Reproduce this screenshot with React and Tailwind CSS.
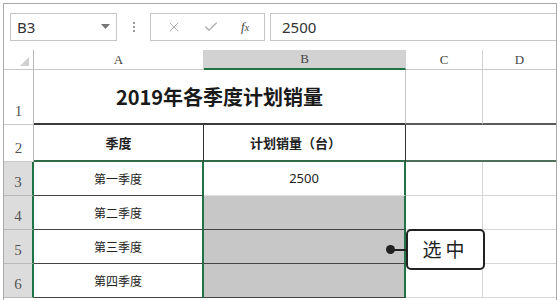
import { X, Check } from 'lucide-react';

const SANS = "font-['Noto_Sans','Noto_Sans_CJK_SC',sans-serif]";
const CJK = "font-['Noto_Sans_CJK_SC',sans-serif]";
const SERIF = "font-['Liberation_Serif','Noto_Sans_CJK_SC',serif]";

const rows = [
  { n: 3, label: '第一季度', value: '2500', active: true },
  { n: 4, label: '第二季度' },
  { n: 5, label: '第三季度' },
  { n: 6, label: '第四季度' },
];

function ColHead({ children, selected, last }) {
  return (
    <div
      className={`flex items-center justify-center text-[13px] text-[#444] ${SERIF} ${
        selected ? 'bg-[#d2d2d2] border-b-2 border-b-[#217346]' : 'border-b border-b-[#c8c8c8]'
      } ${last ? '' : 'border-r border-r-[#d0d0d0]'}`}
    >
      {children}
    </div>
  );
}

function RowHead({ n, selected }) {
  return (
    <div
      className={`flex items-end justify-center pb-[2px] text-[15px] text-[#555] ${SERIF} border-b ${
        selected
          ? 'bg-[#dcdcdc] border-b-[#b8b8b8] border-r-2 border-r-[#217346]'
          : 'border-b-[#c8c8c8] border-r border-r-[#b8b8b8]'
      }`}
    >
      {n}
    </div>
  );
}

export default function App() {
  return (
    <div className="w-[560px] h-[300px] bg-white overflow-hidden relative pt-[3px] pl-[3px]">
      <div className="h-[320px] border-t border-l border-r border-[#a8a8a8] mr-[3px]">
        {/* formula bar */}
        <div className="h-[45px] flex items-start pt-[9px] pl-[6px]">
          <div className="w-[107px] h-[28px] border border-[#c6c6c6] flex items-center justify-between pl-[6px] pr-[6px]">
            <span className={`text-[15px] text-[#333] ${SANS}`}>B3</span>
            <svg width="9" height="6" viewBox="0 0 9 6"><path d="M0 0h9L4.5 5z" fill="#777" /></svg>
          </div>
          <div className="w-[33px] h-[28px] flex flex-col items-center justify-center gap-[2px]">
            <span className="w-[2px] h-[2px] bg-[#999]" />
            <span className="w-[2px] h-[2px] bg-[#999]" />
            <span className="w-[2px] h-[2px] bg-[#999]" />
          </div>
          <div className="w-[115px] h-[28px] border border-[#c6c6c6] flex items-center justify-around px-[4px]">
            <X size={16} strokeWidth={1.5} className="text-[#b0b0b0]" />
            <Check size={16} strokeWidth={2} className="text-[#b0b0b0]" />
            <span className="text-[13px] italic text-[#444] font-['Liberation_Serif',serif]">
              f<span className="text-[10px]">x</span>
            </span>
          </div>
          <div className="flex-1 h-[28px] ml-[5px] border border-[#c6c6c6] border-r-0 flex items-center pl-[11px]">
            <span className={`text-[15px] text-[#333] ${SANS}`}>2500</span>
          </div>
        </div>

        {/* grid */}
        <div className="grid grid-cols-[30px_170px_202px_77px_1fr] grid-rows-[20px_55px_37px_34px_34px_34px_34px] mt-[1px]">
          {/* header row */}
          <div className="border-b border-b-[#c8c8c8] border-r border-r-[#b8b8b8] flex items-end justify-end pr-[4px] pb-[3px]">
            <svg width="9" height="9" viewBox="0 0 9 9"><path d="M9 0V9H0z" fill="#d0d0d0" /></svg>
          </div>
          <ColHead>A</ColHead>
          <ColHead selected>B</ColHead>
          <ColHead>C</ColHead>
          <ColHead last>D</ColHead>

          {/* row 1 */}
          <RowHead n={1} />
          <div className={`col-span-2 flex items-center justify-center border-b-2 border-b-[#3a3a3a] border-r border-r-[#c8c8c8] text-[20px] font-bold text-[#1a1a1a] ${CJK}`}>
            2019年各季度计划销量
          </div>
          <div className="border-b-2 border-b-[#5a5a5a] border-r border-r-[#d0d0d0]" />
          <div className="border-b-2 border-b-[#5a5a5a]" />

          {/* row 2 */}
          <RowHead n={2} />
          <div className={`flex items-center justify-center border-b-2 border-b-[#2e6b48] border-r border-r-[#333] text-[13px] font-bold text-[#222] ${CJK}`}>
            季度
          </div>
          <div className={`flex items-center justify-start pl-[46px] border-b-2 border-b-[#2e6b48] border-r border-r-[#333] text-[13px] font-bold text-[#222] ${CJK}`}>
            计划销量（台）
          </div>
          <div className="border-b-2 border-b-[#4f6f5c]" />
          <div className="border-b-2 border-b-[#4f6f5c]" />

          {rows.map(r => (
            <Row key={r.n} r={r} />
          ))}
        </div>
      </div>

      {/* callout */}
      <div className="absolute left-[386px] top-[245px] w-[9px] h-[9px] rounded-full bg-[#222]" />
      <div className="absolute left-[394px] top-[249px] w-[13px] h-[2px] bg-[#222]" />
      <div className={`absolute left-[406px] top-[229px] w-[79px] h-[41px] rounded-[5px] border-2 border-[#222] bg-white flex items-center justify-center text-[19px] text-[#222] tracking-[4px] ${CJK}`}>
        选中
      </div>
    </div>
  );
}

function Row({ r }) {
  return (
    <>
      <RowHead n={r.n} selected />
      <div className={`flex items-center justify-center border-b border-b-[#444] border-r-2 border-r-[#217346] text-[12px] text-[#222] ${CJK}`}>
        {r.label}
      </div>
      <div
        className={`flex items-center justify-center border-b border-r-2 border-r-[#217346] text-[13px] text-[#222] ${SANS} ${
          r.active ? 'bg-white border-b-[#e0e0e0]' : 'bg-[#c6c7c6] border-b-[#444]'
        }`}
      >
        {r.value}
      </div>
      <div className="border-b border-b-[#d6d6d6] border-r border-r-[#d6d6d6]" />
      <div className="border-b border-b-[#d6d6d6]" />
    </>
  );
}
